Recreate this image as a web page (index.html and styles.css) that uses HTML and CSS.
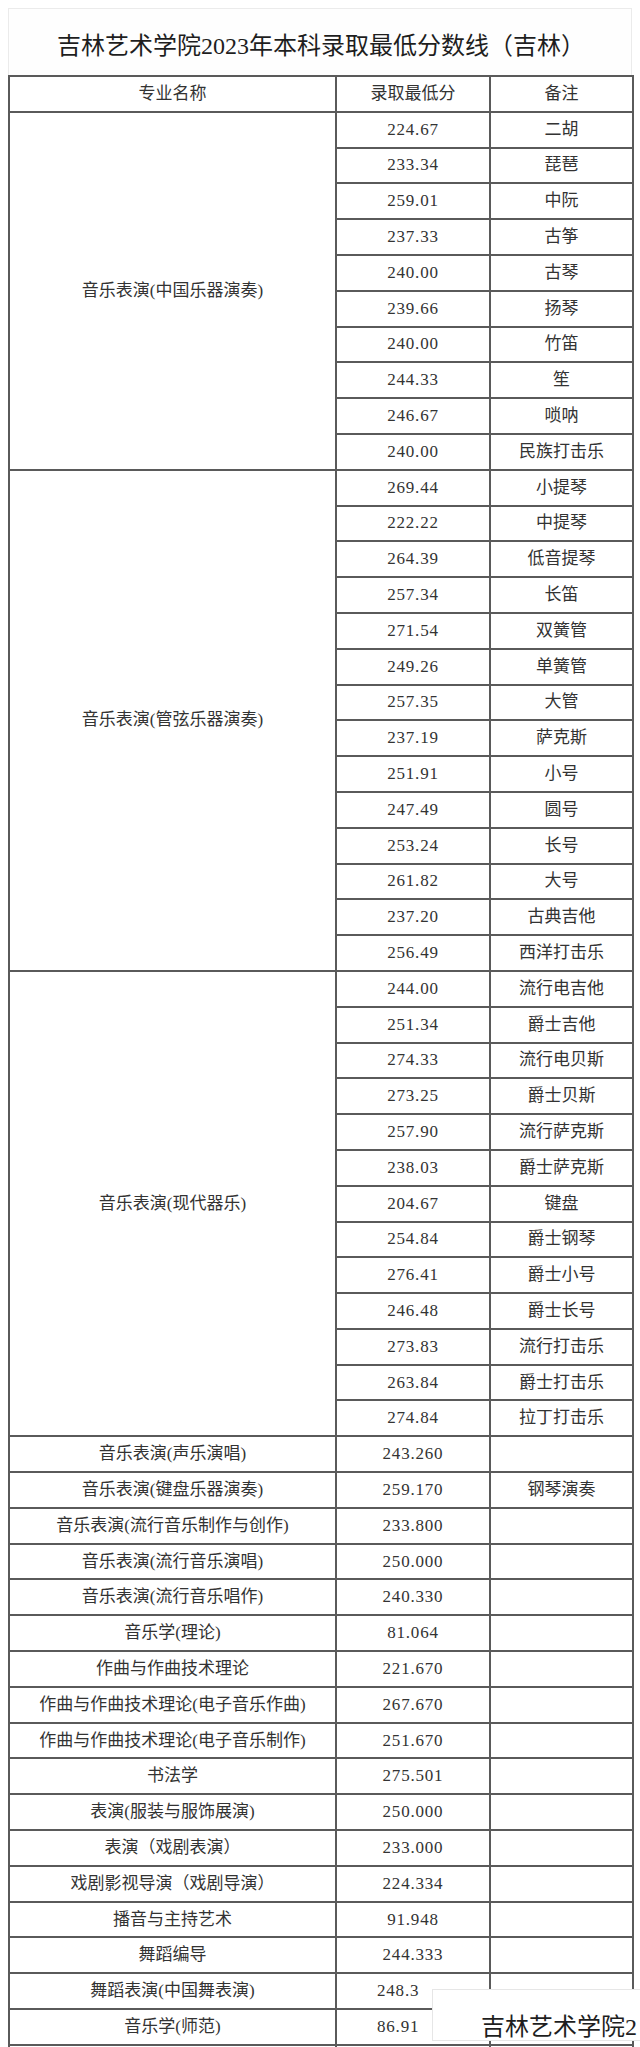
FILE: index.html
```html
<!DOCTYPE html>
<html lang="zh-CN">
<head>
<meta charset="utf-8">
<title>吉林艺术学院2023年本科录取最低分数线（吉林）</title>
<link rel="stylesheet" href="styles.css">
</head>
<body>
<div class="page">
  <div class="title-box"><h1 class="title">吉林艺术学院2023年本科录取最低分数线（吉林）</h1></div>
  <table class="scores">
    <colgroup><col class="c-major"><col class="c-score"><col class="c-note"></colgroup>
    <thead>
      <tr><th>专业名称</th><th>录取最低分</th><th>备注</th></tr>
    </thead>
    <tbody>
      <tr><td rowspan="10">音乐表演(中国乐器演奏)</td><td class="num">224.67</td><td>二胡</td></tr>
      <tr><td class="num">233.34</td><td>琵琶</td></tr>
      <tr><td class="num">259.01</td><td>中阮</td></tr>
      <tr><td class="num">237.33</td><td>古筝</td></tr>
      <tr><td class="num">240.00</td><td>古琴</td></tr>
      <tr><td class="num">239.66</td><td>扬琴</td></tr>
      <tr><td class="num">240.00</td><td>竹笛</td></tr>
      <tr><td class="num">244.33</td><td>笙</td></tr>
      <tr><td class="num">246.67</td><td>唢呐</td></tr>
      <tr><td class="num">240.00</td><td>民族打击乐</td></tr>

      <tr><td rowspan="14">音乐表演(管弦乐器演奏)</td><td class="num">269.44</td><td>小提琴</td></tr>
      <tr><td class="num">222.22</td><td>中提琴</td></tr>
      <tr><td class="num">264.39</td><td>低音提琴</td></tr>
      <tr><td class="num">257.34</td><td>长笛</td></tr>
      <tr><td class="num">271.54</td><td>双簧管</td></tr>
      <tr><td class="num">249.26</td><td>单簧管</td></tr>
      <tr><td class="num">257.35</td><td>大管</td></tr>
      <tr><td class="num">237.19</td><td>萨克斯</td></tr>
      <tr><td class="num">251.91</td><td>小号</td></tr>
      <tr><td class="num">247.49</td><td>圆号</td></tr>
      <tr><td class="num">253.24</td><td>长号</td></tr>
      <tr><td class="num">261.82</td><td>大号</td></tr>
      <tr><td class="num">237.20</td><td>古典吉他</td></tr>
      <tr><td class="num">256.49</td><td>西洋打击乐</td></tr>

      <tr><td rowspan="13">音乐表演(现代器乐)</td><td class="num">244.00</td><td>流行电吉他</td></tr>
      <tr><td class="num">251.34</td><td>爵士吉他</td></tr>
      <tr><td class="num">274.33</td><td>流行电贝斯</td></tr>
      <tr><td class="num">273.25</td><td>爵士贝斯</td></tr>
      <tr><td class="num">257.90</td><td>流行萨克斯</td></tr>
      <tr><td class="num">238.03</td><td>爵士萨克斯</td></tr>
      <tr><td class="num">204.67</td><td>键盘</td></tr>
      <tr><td class="num">254.84</td><td>爵士钢琴</td></tr>
      <tr><td class="num">276.41</td><td>爵士小号</td></tr>
      <tr><td class="num">246.48</td><td>爵士长号</td></tr>
      <tr><td class="num">273.83</td><td>流行打击乐</td></tr>
      <tr><td class="num">263.84</td><td>爵士打击乐</td></tr>
      <tr><td class="num">274.84</td><td>拉丁打击乐</td></tr>

      <tr><td>音乐表演(声乐演唱)</td><td class="num">243.260</td><td></td></tr>
      <tr><td>音乐表演(键盘乐器演奏)</td><td class="num">259.170</td><td>钢琴演奏</td></tr>
      <tr><td>音乐表演(流行音乐制作与创作)</td><td class="num">233.800</td><td></td></tr>
      <tr><td>音乐表演(流行音乐演唱)</td><td class="num">250.000</td><td></td></tr>
      <tr><td>音乐表演(流行音乐唱作)</td><td class="num">240.330</td><td></td></tr>
      <tr><td>音乐学(理论)</td><td class="num">81.064</td><td></td></tr>
      <tr><td>作曲与作曲技术理论</td><td class="num">221.670</td><td></td></tr>
      <tr><td>作曲与作曲技术理论(电子音乐作曲)</td><td class="num">267.670</td><td></td></tr>
      <tr><td>作曲与作曲技术理论(电子音乐制作)</td><td class="num">251.670</td><td></td></tr>
      <tr><td>书法学</td><td class="num">275.501</td><td></td></tr>
      <tr><td>表演(服装与服饰展演)</td><td class="num">250.000</td><td></td></tr>
      <tr><td>表演（戏剧表演）</td><td class="num">233.000</td><td></td></tr>
      <tr><td>戏剧影视导演（戏剧导演）</td><td class="num">224.334</td><td></td></tr>
      <tr><td>播音与主持艺术</td><td class="num">91.948</td><td></td></tr>
      <tr><td>舞蹈编导</td><td class="num">244.333</td><td></td></tr>
      <tr><td>舞蹈表演(中国舞表演)</td><td class="num num-cut">248.3</td><td></td></tr>
      <tr><td>音乐学(师范)</td><td class="num num-cut">86.91</td><td></td></tr>
      <tr><td></td><td class="num"></td><td></td></tr>
    </tbody>
  </table>
  <div class="title-box title-box--copy"><div class="title">吉林艺术学院2</div></div>
</div>
</body>
</html>
```

FILE: styles.css
```css
html, body {
  margin: 0;
  padding: 0;
  background: #ffffff;
}

.page {
  position: relative;
  width: 640px;
  height: 2047px;
  overflow: hidden;
  box-sizing: border-box;
  padding: 8px 8px 0 8px;
  font-family: "Liberation Serif", "Noto Sans CJK SC", serif;
  color: #333333;
  background: #ffffff;
}

.title-box {
  box-sizing: border-box;
  width: 624px;
  height: 67px;
  padding: 22px 0 0 48px;
  border: 1px solid #ebebeb;
  border-bottom: none;
  background: #fefefe;
}

.title {
  margin: 0;
  font-size: 24px;
  line-height: 30px;
  font-weight: normal;
  color: #1e1e1e;
  white-space: nowrap;
}

.title-box--copy {
  position: absolute;
  left: 432px;
  top: 1989px;
  width: 208px;
  height: 52px;
  border: 1px solid #e6e6e6;
  border-right: none;
  background: #ffffff;
}

.scores {
  width: 624px;
  table-layout: fixed;
  border-collapse: collapse;
  font-size: 17px;
}

.c-major { width: 327px; }
.c-score { width: 154px; }
.c-note  { width: 143px; }

.scores tr {
  height: 35.8px;
}

.scores th,
.scores td {
  border: 2px solid #5a5a5a;
  padding: 0;
  text-align: center;
  vertical-align: middle;
  font-weight: normal;
  line-height: 20px;
  white-space: nowrap;
  color: #333333;
}

.scores .num {
  letter-spacing: 0.8px;
}

.scores .num-cut {
  text-align: left;
  padding-left: 40px;
}
```
